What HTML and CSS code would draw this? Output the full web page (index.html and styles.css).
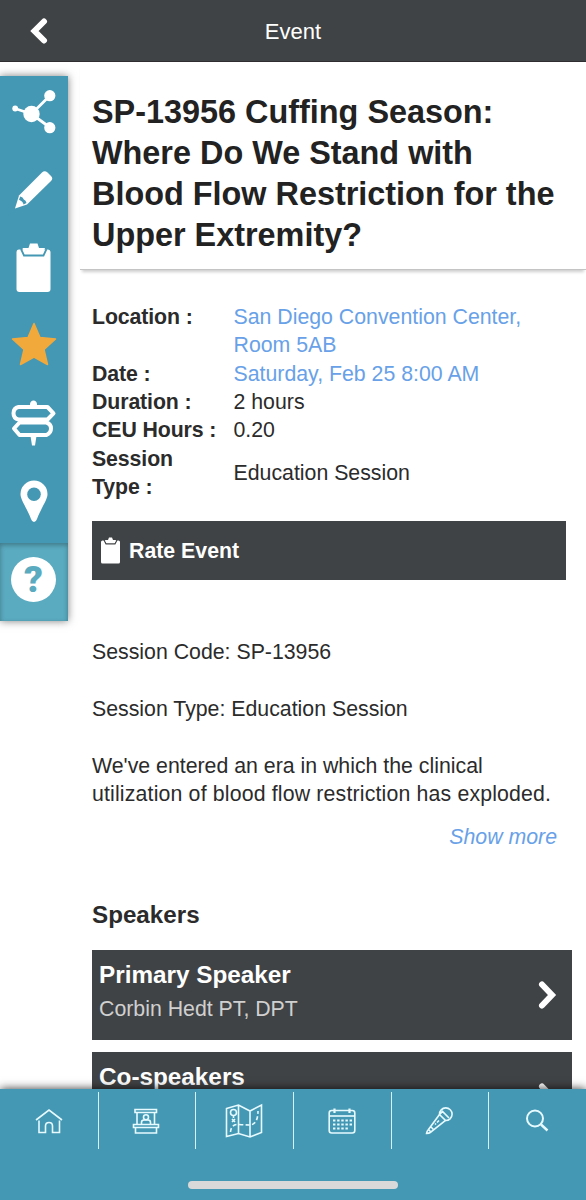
FILE: index.html
```html
<!DOCTYPE html>
<html lang="en">
<head>
  <meta charset="UTF-8" />
  <meta name="viewport" content="width=device-width, initial-scale=1" />
  <title>Event</title>
  <link rel="stylesheet" href="styles.css">
</head>
<body>

  <header>
    <a href="#" class="back" aria-label="Back">
      <svg width="18" height="28" viewBox="0 0 18 28"><path d="M14 4.500 4.500 14 14 23.500" fill="none" stroke="#fff" stroke-width="6" stroke-linecap="round"/></svg>
    </a>
    <h1>Event</h1>
  </header>

  <div class="page">
    <!-- Action sidebar -->
    <nav class="sidebar">
      <a href="#" aria-label="Share">
        <svg width="44" height="44" viewBox="0.500 0 44 44" fill="#fff"><path d="M3.500 18.500 20 24 38.500 5.500M20 24l18.500 13.500" fill="none" stroke="#fff" stroke-width="2.800"/><circle cx="3.700" cy="18.500" r="2.900"/><circle cx="20" cy="24" r="8.200"/><circle cx="38.300" cy="5.700" r="5.600"/><circle cx="38.300" cy="37.700" r="5.600"/></svg>
      </a>
      <a href="#" aria-label="Notes">
        <svg width="44" height="44" viewBox="1 0 44 44"><path d="M4 40.500 8 27.500 31 4.500Q33.500 2 36.500 4.500L40 8Q42.500 10.500 40 13L16 36.500Z" fill="#fff"/><path d="M9.200 28.500Q12 29 12.800 31.500 15 32 15.500 35L12.500 36.500Q12 33.500 8 31.800Z" fill="#4598b4"/></svg>
      </a>
      <a href="#" aria-label="Survey">
        <svg width="44" height="50" viewBox="0.500 -1 44 50"><path d="M7.500 6.500H36Q39 6.500 39 9.500V46Q39 49 36 49H8Q5 49 5 46V9.500Q5 6.500 7.500 6.500Z" fill="#fff"/><path d="M9.500 6 12.500 12.500H32L35 6" fill="none" stroke="#4598b4" stroke-width="1.800"/><path d="M11 5H17L18.500 .500H26L27.500 5H33.500L31 11H13.500Z" fill="#fff"/></svg>
      </a>
      <a href="#" aria-label="Favorite">
        <svg width="46" height="46" viewBox="0 1 46 46"><path d="M23 2.500 29 16.500 44.500 18 33 28.500 36.500 43.500 23 36 9.500 43.500 13 28.500 1.500 18 17 16.500Z" fill="#f2a93b" stroke="#f2a93b" stroke-width="1.500" stroke-linejoin="round"/></svg>
      </a>
      <a href="#" aria-label="Directions">
        <svg width="46" height="46" viewBox="0.500 0 46 46" fill="none" stroke="#fff" stroke-width="4"><path d="M19.500 6V4Q20 .500 23 .500T26.500 4V6Z" fill="#fff" stroke="none"/><path d="M8 7H37L43 13.300 37 19.500H8Q3 18.500 3 13.300T8 7Z" stroke-linejoin="round"/><path d="M9 22.500H36Q40.500 24 40.500 28.500T36 35H9L3.500 28.500Z" stroke-linejoin="round"/><path d="M20 36H26L24.500 45.500H21.500Z" fill="#fff" stroke="none"/></svg>
      </a>
      <a href="#" aria-label="Map">
        <svg width="32" height="44" viewBox="0 0 32 44"><path d="M16 1.500A13.500 13.500 0 0 0 2.500 15C2.500 21 8 27 13 40Q14 43 16 43T19 40C24 27 29.500 21 29.500 15A13.500 13.500 0 0 0 16 1.500Z" fill="#fff"/><circle cx="16" cy="15.300" r="6.800" fill="#4598b4"/></svg>
      </a>
      <a href="#" class="help" aria-label="Help">
        <span class="question">?</span>
      </a>
    </nav>

    <main>
      <h2>SP-13956 Cuffing Season: Where Do We Stand with Blood Flow Restriction for the Upper Extremity?</h2>

      <div class="details">
        <table>
          <tr><th class="top">Location :</th><td><a href="#">San Diego Convention Center, Room 5AB</a></td></tr>
          <tr><th>Date :</th><td><a href="#">Saturday, Feb 25 8:00 AM</a></td></tr>
          <tr><th>Duration :</th><td>2 hours</td></tr>
          <tr><th>CEU Hours :</th><td>0.20</td></tr>
          <tr><th>Session<br>Type :</th><td>Education Session</td></tr>
        </table>

        <a href="#" class="rate">
          <svg width="19" height="27" viewBox="0 0 19 27"><path d="M1.500 3.500H17.500Q19 3.500 19 5V25Q19 26.500 17.500 26.500H1.500Q0 26.500 0 25V5Q0 3.500 1.500 3.500Z" fill="#fff"/><path d="M3 3 5 6.800H14L16 3" fill="none" stroke="#404345" stroke-width="1.200"/><path d="M4 3H7L8 .500H11L12 3H15L13.500 6H5.500Z" fill="#fff"/></svg>
          <span>Rate Event</span>
        </a>

        <div class="description">
          <p>Session Code: SP-13956</p>
          <p>Session Type: Education Session</p>
          <p>We've entered an era in which the clinical <span class="wide">utilization of blood flow restriction has exploded.</span></p>
        </div>
        <a href="#" class="more">Show more</a>

        <h3>Speakers</h3>
        <a href="#" class="card">
          <span class="info"><strong>Primary Speaker</strong><span>Corbin Hedt PT, DPT</span></span>
          <svg width="20" height="30" viewBox="0 0 20 30"><path d="M5 4.500 15 15 5 25.500" fill="none" stroke="#fff" stroke-width="6" stroke-linecap="round"/></svg>
        </a>
        <a href="#" class="card">
          <span class="info"><strong>Co-speakers</strong></span>
          <svg width="20" height="30" viewBox="0 0 20 30"><path d="M5 4.500 15 15 5 25.500" fill="none" stroke="#fff" stroke-width="6" stroke-linecap="round"/></svg>
        </a>
      </div>
    </main>
  </div>

  <footer>
    <nav class="tabs">
      <a href="#" aria-label="Home">
        <svg width="28" height="26" viewBox="0 0 28 26"><path d="M1 12 14 2 27 12M4 12.500V24.500H10.500V18Q10.500 14.500 14 14.500T17.500 18V24.500H24.500V12.500"/></svg>
      </a>
      <a href="#" aria-label="Exhibitors">
        <svg width="28" height="28" viewBox="0 0 28 28"><path d="M3 2.500H24.500V5.500H3ZM5 5.500V17.500M22.500 5.500V17.500M1.500 17.500H26.500V20.500H1.500ZM3.500 20.500H24.500V26H3.500ZM9.500 17.500V15.500Q9.500 13 12 13H16Q18.500 13 18.500 15.500V17.500"/><circle cx="14" cy="10.300" r="2.500"/></svg>
      </a>
      <a href="#" aria-label="Maps">
        <svg width="38" height="36" viewBox="0 0 38 36"><path d="M1.500 5.500 13.500 2 25 8 36.500 2V29.500L25 34 13.500 30.500 1.500 33.500ZM13.500 2V30.500M25 8V34"/><path d="M5.500 29Q6 21 14 21.500T26 22Q33 20 33 8" stroke-dasharray="4 2.500"/><circle cx="8.500" cy="9.500" r="3"/><path d="M8.500 12.500V15M7 16l3 3M10 16l-3 3"/></svg>
      </a>
      <a href="#" aria-label="Schedule">
        <svg width="28" height="28" viewBox="0 0 28 28"><rect x="1.200" y="3.500" width="25.600" height="22.500" rx="2.500"/><path d="M1 9H27"/><path d="M6.500 1.500V6M21.500 1.500V6" stroke-width="2.200"/><path d="M5 13.500H24M5 17.500H24M5 21.500H20.500" stroke-width="2.200" stroke-dasharray="2.400 1.750"/></svg>
      </a>
      <a href="#" aria-label="Speakers">
        <svg width="28" height="28" viewBox="0 0 28 28"><path d="M14.500 7.500 20.500 13.500 6 25 3.500 22.500ZM3.500 22.500Q1.500 24.500 1.500 26.500 4 26.500 6 25M5.500 19.500 8.500 22.500"/><path d="M14.500 7.500A6.300 6.300 0 1 1 20.500 13.500M14.500 7.500 17.500 4.500 24 11M12 15.500l2-2M10 17.500l1-1"/></svg>
      </a>
      <a href="#" aria-label="Search">
        <svg width="24" height="24" viewBox="0 0 24 24"><circle cx="10" cy="9.500" r="8" stroke-width="2"/><path d="M16 15.500 22.500 21.500" stroke-width="2.400"/></svg>
      </a>
    </nav>
    <div class="home-bar"></div>
  </footer>

</body>
</html>
```
FILE: styles.css
```css
* {
  box-sizing: border-box;
}
body {
  font-family: "Liberation Sans", Arial, sans-serif;
  font-size: 21.3px;
  line-height: 28.35px;
  background: #fff;
  color: #2b2b2b;
  margin: 0;
  height: 1200px;
  display: flex;
  flex-direction: column;
  overflow: hidden;
}
a {
  color: #68a1e8;
  text-decoration: none;
}
svg {
  display: block;
}
header {
  background: #404345;
  color: #fff;
  height: 62px;
  flex: none;
  display: grid;
  grid-template-columns: 60px 1fr 60px;
  align-items: center;
  border-bottom: 1px solid #302d30;
}
header h1 {
  margin: 3px 0 0;
  font-size: 22px;
  font-weight: normal;
  text-align: center;
}
.back {
  padding-left: 30px;
}
.page {
  flex: 1;
  min-height: 0;
  display: flex;
  align-items: flex-start;
  overflow: hidden;
}
.sidebar {
  width: 68px;
  flex: none;
  margin-top: 14px;
  background: #4598b4;
  box-shadow: 0 0 8px rgba(0,0,0,0.5);
}
.sidebar a {
  height: 77.8px;
  display: flex;
  align-items: center;
  justify-content: center;
  padding: 0 1px 6px 0;
}
.sidebar .help {
  background: #5aabc0;
  box-shadow: inset 0 2px 5px rgba(0,0,0,0.3);
}
.question {
  width: 45px;
  height: 45px;
  border-radius: 50%;
  background: #fff;
  color: #5aabc0;
  font-family: Roboto, sans-serif;
  font-size: 37px;
  font-weight: 900;
  line-height: 46px;
  text-align: center;
}
.sidebar .help {
  padding-bottom: 5px;
}
main {
  flex: 1;
  margin-left: 12px;
}
h2 {
  margin: 0;
  padding: 30px 20px 13px 12px;
  font-size: 32.4px;
  line-height: 41px;
  color: #222;
  border-bottom: 1px solid #c4c4c4;
  box-shadow: 0 4px 3px -2px rgba(0,0,0,0.2);
}
.details {
  padding: 33px 14px 0 12px;
}
table {
  border-collapse: collapse;
  width: 100%;
}
th, td {
  padding: 0;
  text-align: left;
}
th {
  width: 141.5px;
  letter-spacing: -0.1px;
}
td {
  padding-right: 40px;
}
.top {
  vertical-align: top;
}
.rate {
  display: flex;
  align-items: center;
  gap: 9px;
  height: 59px;
  margin: 20px 6px 0 0;
  padding-left: 9px;
  background: #404345;
  color: #fff;
  font-weight: bold;
}
.description {
  margin-top: 58px;
}
.description .wide {
  letter-spacing: 0.16px;
}
.description p {
  margin: 0 0 28.35px;
}
.more {
  display: block;
  margin-top: -14px;
  padding-right: 15px;
  font-style: italic;
  text-align: right;
}
h3 {
  margin: 49.5px 0 21px;
  font-size: 24.2px;
  line-height: 28px;
}
.card {
  display: flex;
  align-items: center;
  justify-content: space-between;
  height: 90px;
  margin-bottom: 12px;
  padding: 0 15px 0 7px;
  background: #404345;
  color: #d0d0d0;
}
.info {
  align-self: flex-start;
  display: flex;
  flex-direction: column;
  gap: 5px;
  padding-top: 11.5px;
}
.info strong {
  color: #fff;
  font-size: 24.3px;
}
footer {
  height: 111px;
  flex: none;
  position: relative;
  padding-top: 3px;
  background: #4598b4;
  box-shadow: 0 0 9px rgba(0,0,0,0.8);
}
.tabs {
  display: grid;
  grid-template-columns: repeat(6, 1fr);
}
.tabs a {
  height: 57px;
  display: flex;
  align-items: center;
  justify-content: center;
}
.tabs a + a {
  border-left: 1px solid #d5f2fa;
  padding-right: 1px;
}
.tabs svg {
  fill: none;
  stroke: #e6faff;
  stroke-width: 1.6;
}
.home-bar {
  width: 210px;
  height: 8px;
  margin: 32px auto 0;
  border-radius: 4px;
  background: #d9d9d9;
}
```
